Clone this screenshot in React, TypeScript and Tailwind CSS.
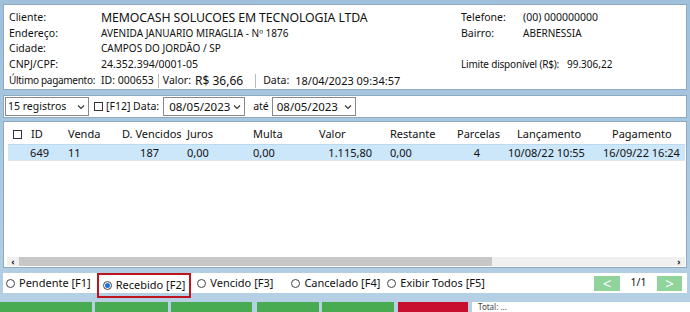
import React from "react";

const font = { fontFamily: '"Noto Sans", "Open Sans", sans-serif' };

function Chevron() {
  return (
    <svg width="8" height="6" viewBox="0 0 8 6" className="shrink-0">
      <path d="M1 1.5 L4 4.5 L7 1.5" fill="none" stroke="#333" strokeWidth="1.1" />
    </svg>
  );
}

function Radio({ checked }: { checked?: boolean }) {
  return (
    <span className="inline-flex w-[9px] h-[9px] rounded-full border border-[#444] items-center justify-center mr-[4px] bg-white">
      {checked && <span className="w-[5px] h-[5px] rounded-full bg-[#1a73d9]" />}
    </span>
  );
}

function Box() {
  return <span className="inline-block w-[9px] h-[9px] border border-[#333] bg-white" />;
}

const cols = "grid grid-cols-[20px_34px_56px_64px_66px_66px_71px_67px_51px_95px_88px]";

export default function App() {
  return (
    <div
      className="w-[690px] h-[312px] overflow-hidden flex flex-col bg-gradient-to-b from-[#9fc0db] to-[#b6d0e4] text-[11px] text-[#111] whitespace-nowrap"
      style={font}
    >
      {/* top panel */}
      <div className="shrink-0 mx-[3px] mt-[4px] h-[86px] bg-white border border-[#8ea9c2] flex px-[5px] pt-[5px] leading-[15.7px]">
        <div className="w-[92px] shrink-0 flex flex-col text-[10.5px]">
          <span>Cliente:</span>
          <span>Endereço:</span>
          <span>Cidade:</span>
          <span>CNPJ/CPF:</span>
          <span className="text-[10px] tracking-[-0.3px]">Último pagamento:</span>
        </div>
        <div className="w-[360px] shrink-0 flex flex-col text-[10px]">
          <span className="text-[12.3px] leading-[15.7px] tracking-[-0.1px]">MEMOCASH SOLUCOES EM TECNOLOGIA LTDA</span>
          <span>AVENIDA JANUARIO MIRAGLIA - Nº 1876</span>
          <span>CAMPOS DO JORDÃO / SP</span>
          <span className="text-[10.5px]">24.352.394/0001-05</span>
          <span className="flex items-center text-[10.5px]">
            <span>ID: 000653</span>
            <span className="w-px h-[14px] bg-[#bbb] mx-[4px]" />
            <span>Valor:</span>
            <span className="ml-[4px] text-[12px]">R$ 36,66</span>
            <span className="w-px h-[14px] bg-[#bbb] ml-[12px] mr-[7px]" />
            <span>Data:</span>
            <span className="ml-[6px] text-[11px]">18/04/2023 09:34:57</span>
          </span>
        </div>
        <div className="grid grid-cols-[62px_44px_auto] auto-rows-[15.7px] text-[10.5px] flex-1">
          <span>Telefone:</span>
          <span className="col-span-2">(00) 000000000</span>
          <span>Bairro:</span>
          <span className="col-span-2 text-[10px]">ABERNESSIA</span>
          <span className="col-span-3">&nbsp;</span>
          <span className="col-span-2 text-[10px] tracking-[-0.2px]">Limite disponível (R$):</span>
          <span className="text-[10px]">99.306,22</span>
        </div>
      </div>

      {/* toolbar */}
      <div className="shrink-0 mx-[3px] mt-[5px] h-[23px] bg-white border border-[#8ea9c2] flex items-center pl-[1px]">
        <div className="w-[84px] h-[19px] border border-[#888] flex items-center justify-between pl-[2px] pr-[3px] text-[10.5px]">
          <span>15 registros</span>
          <Chevron />
        </div>
        <div className="flex items-center gap-[3px] ml-[5px] text-[10.5px]">
          <Box />
          <span>[F12] Data:</span>
        </div>
        <div className="w-[82px] h-[19px] border border-[#888] flex items-center justify-between pl-[5px] pr-[3px] ml-[4px] text-[11.5px]">
          <span>08/05/2023</span>
          <Chevron />
        </div>
        <span className="ml-[8px] mr-[3px] text-[10.5px]">até</span>
        <div className="w-[84px] h-[19px] border border-[#888] flex items-center justify-between pl-[4px] pr-[3px] text-[11.5px]">
          <span>08/05/2023</span>
          <Chevron />
        </div>
      </div>

      {/* grid */}
      <div className="shrink-0 mx-[3px] mt-[3px] h-[147px] bg-white border border-[#8ea9c2] flex flex-col pl-[4px] pr-[1px]">
        <div className={cols + " h-[19px] mt-[3px] items-center"}>
          <span className="pl-[5px] flex"><Box /></span>
          <span className="pl-[3px]">ID</span>
          <span className="pl-[6px]">Venda</span>
          <span className="pl-[4px]">D. Vencidos</span>
          <span className="pl-[5px]">Juros</span>
          <span className="pl-[5px]">Multa</span>
          <span className="pl-[5px]">Valor</span>
          <span className="pl-[5px]">Restante</span>
          <span className="pl-[5px]">Parcelas</span>
          <span className="pl-[14px]">Lançamento</span>
          <span className="pl-[14px]">Pagamento</span>
        </div>
        <div className={cols + " h-[17px] items-center bg-[#cce6fa] border-b border-[#e3e3e3] border-t border-t-[#bcd9f0]"}>
          <span />
          <span className="text-right pr-[13px]">649</span>
          <span className="pl-[6px]">11</span>
          <span className="text-right pr-[23px]">187</span>
          <span className="pl-[5px]">0,00</span>
          <span className="pl-[5px]">0,00</span>
          <span className="text-right pr-[13px]">1.115,80</span>
          <span className="pl-[5px]">0,00</span>
          <span className="text-right pr-[23px]">4</span>
          <span className="pl-[5px]">10/08/22 10:55</span>
          <span className="pl-[5px]">16/09/22 16:24</span>
        </div>
        <div className="flex-1" />
        <div className="h-[9px] mb-[1px] flex items-center bg-[#f0f0f0] -ml-[1px]">
          <span className="w-[12px] text-center text-[9px] leading-none font-bold">‹</span>
          <div className="w-[473px] h-[9px] bg-[#c7c7c7]" />
          <div className="flex-1" />
          <span className="w-[12px] text-center text-[9px] leading-none font-bold">›</span>
        </div>
      </div>

      {/* radio row */}
      <div className="shrink-0 mx-[3px] mt-[5px] h-[20px] bg-white flex items-center pl-[3px] text-[11px]">
        <span className="flex items-center"><Radio />Pendente [F1]</span>
        <span className="flex items-center ml-[6px] px-[4px] h-[25px] border-2 border-[#c0141c] mt-[4px]"><Radio checked />Recebido [F2]</span>
        <span className="flex items-center ml-[6px]"><Radio />Vencido [F3]</span>
        <span className="flex items-center ml-[18px]"><Radio />Cancelado [F4]</span>
        <span className="flex items-center ml-[7px]"><Radio />Exibir Todos [F5]</span>
        <div className="flex-1" />
        <div className="flex items-center mr-[5px]">
          <div className="w-[26px] h-[15px] bg-[#90d49c] text-white flex items-center justify-center text-[15px] leading-none">&lt;</div>
          <span className="w-[37px] text-center text-[10.5px]">1/1</span>
          <div className="w-[25px] h-[15px] bg-[#90d49c] text-white flex items-center justify-center text-[15px] leading-none">&gt;</div>
        </div>
      </div>

      {/* bottom buttons */}
      <div className="shrink-0 mt-[9px] flex gap-[3px] h-[10px]">
        <div className="w-[92px] bg-[#48ab52]" />
        <div className="w-[73px] bg-[#48ab52]" />
        <div className="w-[81px] bg-[#48ab52]" />
        <div className="w-[62px] bg-[#48ab52] ml-[2px]" />
        <div className="w-[72px] bg-[#48ab52]" />
        <div className="w-[70px] bg-[#c8102e] ml-[1px]" />
        <div className="flex-1 bg-white ml-[1px] text-[8px] text-[#444] pl-[6px] leading-[10px]">Total: ...</div>
      </div>
    </div>
  );
}
